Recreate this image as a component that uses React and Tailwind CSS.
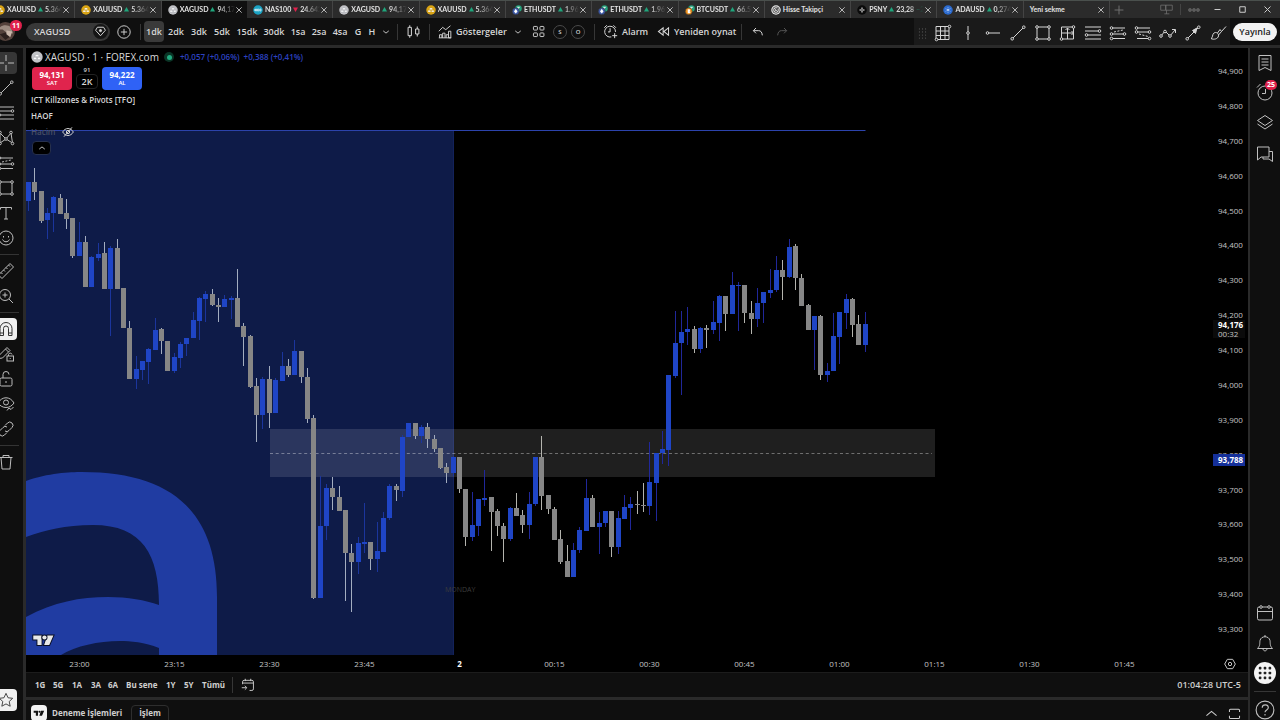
import React from "react";

const BLUE = "#1f45c6";
const GRAY = "#868686";

// Each candle: colour, high, top, bottom, low (chart canvas units)
const CANDLES = `B 182 182 201 211|G 168 182 192 200|G 191 191 221 223|B 208 213 220 239|B 196 197 213 232|G 194 198 214 214|G 199 213 219 229|G 218 218 256 258|B 222 242 256 256|G 236 242 287 287|B 256 257 287 287|B 243 254 258 261|G 242 253 289 289|B 246 248 289 336|G 239 248 289 289|G 288 288 328 328|G 321 328 379 379|B 356 369 379 389|B 361 361 370 380|B 348 349 362 384|B 318 330 350 350|G 328 329 341 354|G 341 341 371 371|B 353 357 371 373|B 342 344 358 368|B 338 338 344 356|B 312 320 338 338|B 297 298 321 340|B 291 294 299 322|G 289 294 305 306|G 298 305 307 322|B 295 299 307 307|B 296 298 300 319|G 269 298 327 327|G 323 326 337 366|G 335 336 387 388|G 378 386 415 442|B 377 379 415 429|G 366 379 413 428|B 378 380 413 413|B 352 366 381 381|G 359 366 375 377|B 340 351 375 375|G 351 351 377 383|G 368 377 419 423|G 415 418 598 599|B 476 526 598 598|B 484 488 526 540|G 477 488 497 510|G 486 497 511 511|G 510 510 553 601|G 544 553 562 612|B 537 543 562 574|B 503 542 544 553|G 542 542 559 570|B 522 551 559 572|B 512 518 552 552|B 484 486 518 520|G 484 486 490 501|B 435 437 491 497|B 423 423 437 437|G 423 423 436 439|B 425 427 436 443|G 423 427 439 448|G 435 439 449 452|G 448 448 468 469|G 463 467 473 483|B 456 457 473 476|G 457 457 489 493|G 489 489 537 546|B 492 525 537 541|B 499 499 526 536|B 470 498 500 506|G 497 497 512 551|G 509 511 526 536|G 523 526 539 562|B 507 508 539 541|G 493 508 516 516|G 510 515 525 533|B 492 504 525 539|B 457 457 504 506|G 436 457 496 510|G 495 495 509 514|G 507 509 540 540|G 530 539 562 564|G 545 561 577 577|B 543 550 577 577|B 527 530 550 553|B 479 498 531 531|G 495 498 527 527|B 512 523 527 554|B 511 511 523 527|G 511 511 547 557|B 511 518 547 554|B 495 507 519 519|B 497 504 508 530|G 491 504 505 514|G 483 505 506 512|B 442 482 506 515|B 453 453 483 521|B 431 449 453 464|B 375 375 450 466|B 311 343 376 378|B 311 332 343 395|B 307 329 332 345|G 326 329 349 353|B 327 328 349 353|G 325 328 330 348|B 301 322 330 334|B 295 296 323 341|G 296 296 314 331|B 272 285 314 314|B 282 285 286 331|G 285 285 313 323|G 301 313 319 334|B 288 303 319 327|B 292 292 303 323|B 269 290 293 298|B 256 270 290 292|G 260 270 277 300|B 239 247 277 278|G 244 246 278 290|G 274 278 306 306|G 304 305 330 330|B 316 316 330 370|G 315 316 375 380|B 363 371 375 382|B 313 336 371 371|B 312 312 337 364|B 294 299 313 329|G 298 299 325 337|G 315 324 345 345|B 312 324 345 352`
  .split("|")
  .map((row, i) => {
    const [c, ...v] = row.split(" ");
    const [high, top, bottom, low] = v.map(Number);
    return { up: c === "B", high, top, bottom, low, x: 28.4 + i * 6.34 };
  });

const PRICES = ["94,900", "94,800", "94,700", "94,600", "94,500", "94,400", "94,300", "94,200", "94,100", "94,000", "93,900", "93,800", "93,700", "93,600", "93,500", "93,400", "93,300"];
const TIMES = ["23:00", "23:15", "23:30", "23:45", "2", "00:15", "00:30", "00:45", "01:00", "01:15", "01:30", "01:45"];

function Icon({ children, className = "size-[18px]", w = 1 }) {
  return (
    <svg viewBox="0 0 18 18" className={"shrink-0 " + className} fill="none" stroke="currentColor" strokeWidth={w} aria-hidden="true">
      {children}
    </svg>
  );
}
const Dot = ({ x, y }) => <circle cx={x} cy={y} r="1.3" fill="#111" />;

const TrendLine = () => (<Icon><path d="M4 14 14 4" /><Dot x={3.2} y={14.8} /><Dot x={14.8} y={3.2} /></Icon>);
const Fib = () => (<Icon><path d="M1 3h16M1 7h14M4 11h13M1 15h16" /><Dot x={15.5} y={7} /><Dot x={2.5} y={11} /></Icon>);
const RectTool = () => (<Icon><rect x="3" y="3" width="12" height="12" /><Dot x={3} y={3} /><Dot x={15} y={3} /><Dot x={3} y={15} /><Dot x={15} y={15} /></Icon>);
const LongPos = () => (<Icon><path d="M3 4h13M3 10h12M3 14.500h13" /><path d="M5 8 14 6" strokeDasharray="2 1.500" /><Dot x={2.5} y={4} /><Dot x={2.5} y={10} /><Dot x={15.5} y={10} /><Dot x={2.5} y={14.5} /></Icon>);
const ShortPos = () => (<Icon><path d="M3 4h13M3 8h12M3 14.500h13" /><path d="M5 10l9 2.500" strokeDasharray="2 1.500" /><Dot x={2.5} y={4} /><Dot x={2.5} y={8} /><Dot x={15.5} y={8} /><Dot x={15.5} y={14.5} /></Icon>);
const Chevron = ({ up }) => (<Icon className="size-[10px]" w={1.6}><path d={up ? "M4 11l5-4 5 4" : "M4 7l5 4 5-4"} /></Icon>);

const LEFT_TOOLS = [
  ["İmleç", <Icon><path d="M9 1v6M9 11v6M1 9h6M11 9h6" /></Icon>, "active"],
  ["Trend çizgisi", <TrendLine />],
  ["Fibonacci", <Fib />],
  ["Formasyonlar", <Icon><path d="M3 14V4l6 6 5-6 1.500 10L9 10l-6 4" /><Dot x={3} y={3.5} /><Dot x={14} y={3.5} /><Dot x={9} y={10} /><Dot x={3} y={14.5} /><Dot x={15.5} y={14.5} /></Icon>],
  ["Tahmin", <LongPos />],
  ["Şekiller", <RectTool />],
  ["Metin", <Icon><path d="M3.500 5.500v-2h11v2M9 3.500v11.500M7 15h4" /></Icon>],
  ["Simgeler", <Icon><circle cx="9" cy="9" r="7" /><path d="M6.500 7v1.500M11.500 7v1.500M5.500 10.500c1.500 3 5.500 3 7 0" /></Icon>],
  "sep",
  ["Ölçüm", <Icon><path d="M1.500 13 13 1.500 16.500 5 5 16.500ZM4 10.500l1.500 1.500M6.500 8 8 9.500M9 5.500 10.500 7M11.500 3 13 4.500" /></Icon>],
  ["Yakınlaştır", <Icon><circle cx="8" cy="8" r="5.500" /><path d="M12 12l4 4M8 5.500v5M5.500 8h5" /></Icon>],
  "sep",
  ["Mıknatıs", <Icon><path d="M3 15.500V8.500a6 6 0 0 1 12 0v7h-3.500V8.500a2.500 2.500 0 0 0-5 0v7ZM3 13h3.500M11.500 13H15" /></Icon>, "on"],
  ["Çizim modu", <Icon><path d="M1.500 13.500 2.500 10 10 2.500l3 3-7.500 7.500ZM8.500 4l3 3" /><rect x="10" y="11" width="6.500" height="5" /><path d="M11.500 11V9.500a1.800 1.800 0 0 1 3.500 0M13.200 13v1" /></Icon>],
  ["Kilitle", <Icon><rect x="3" y="8" width="12" height="8" rx="1.500" /><path d="M6 8V4.500a3 3 0 0 1 6 0M9 11v2" /></Icon>],
  ["Gizle", <Icon><path d="M1 8c4-7 12-7 16 0-4 6-12 6-16 0Z" /><circle cx="9" cy="7.500" r="2.500" /><path d="M10 15.500l2-2.500 2 1.500 2.500-2.500" /></Icon>],
  ["Bağla", <Icon><path d="M8 5.500 10.500 3a3 3 0 0 1 4.500 4.500L12 10.500a3 3 0 0 1-4 .5M10 12.500 7.500 15A3 3 0 0 1 3 10.500L6 7.500a3 3 0 0 1 4-.5" /></Icon>],
  "sep",
  ["Sil", <Icon><path d="M2.500 4.500h13M6 4.500V2.500h6v2M4 4.500 5 16h8l1-11.500" /></Icon>],
];

const DRAW_TOOLS = [
  ["Izgara", <Icon><path d="M2 2.500h13v13H2ZM2 7h13M2 11.500h13M6.500 2.500v13M11 2.500v13" /><Dot x={2.5} y={15.5} /><Dot x={15.5} y={2.5} /></Icon>],
  ["Dikey çizgi", <Icon><path d="M9 2v14" /><Dot x={9} y={9} /></Icon>],
  ["Yatay ışın", <Icon><path d="M3 9h13" /><Dot x={3.5} y={9} /></Icon>],
  ["Trend", <TrendLine />],
  ["Dikdörtgen", <RectTool />],
  ["Fiyat aralığı", <Icon><path d="M2.500 3h12v12h-12ZM8.500 4v11M3 9h12M6.500 6l2-2 2 2M12.500 7l2 2-2 2" /><Dot x={2.5} y={15} /><Dot x={14.5} y={3} /></Icon>],
  ["Fib", <Fib />],
  ["Uzun pozisyon", <LongPos />],
  ["Kısa pozisyon", <ShortPos />],
  ["Elliott", <Icon><path d="M2 12l4-5 5 5 5-6M13 5.500h3.500V9" /><Dot x={2} y={12} /><Dot x={6} y={7.5} /><Dot x={11} y={12} /></Icon>],
  ["Ok", <Icon><path d="M4 14 14 4" /><path d="M13 4 8.500 6.500l3 3Z" fill="currentColor" /><Dot x={3.2} y={14.8} /><Dot x={14.8} y={3.2} /></Icon>],
  ["Fırça", <Icon><path d="M2 14.500c2-.5 1-4 3-5.500 2-1.500 5 .5 4.500 3-.5 3-5 4-7.500 2.500ZM8.500 9 11 5.500l1.500 2L17 2.500M9.500 11l3-3.500" /></Icon>],
];

const TABS = [
  { kind: "gold", name: "XAUUSD", price: "5.364,9", up: true },
  { kind: "gold", name: "XAUUSD", price: "5.364,9", up: true },
  { kind: "silver", name: "XAGUSD", price: "94,176", up: true, active: true },
  { kind: "nas", name: "NAS100", price: "24.642,", up: false },
  { kind: "silver", name: "XAGUSD", price: "94,176", up: true },
  { kind: "gold", name: "XAUUSD", price: "5.364,9", up: true },
  { kind: "eth", name: "ETHUSDT", price: "1.965,", up: true },
  { kind: "eth", name: "ETHUSDT", price: "1.965,", up: true },
  { kind: "btc", name: "BTCUSDT", price: "66.587", up: true },
  { kind: "target", name: "Hisse Takipçi" },
  { kind: "psny", name: "PSNY", price: "23,28", extra: "−20", up: true },
  { kind: "ada", name: "ADAUSD", price: "0,2740", up: true },
  { name: "Yeni sekme" },
];

function Coin({ kind, className = "size-[10px]" }) {
  const fill = { gold: "#dba514", silver: "#c2c3c7", nas: "#1ba3c4", psny: "#0a0a0a", ada: "#2b6bd0", target: "#e5e5e5" }[kind];
  return (
    <svg viewBox="0 0 20 20" className={"shrink-0 " + className} aria-hidden="true">
      {(kind === "eth" || kind === "btc") && (
        <>
          <circle cx="13" cy="7" r="6.500" fill="#24a17b" />
          <path d="M10 4.500h6M13 4.500v5" stroke="#fff" strokeWidth="1.500" />
          <circle cx="7.500" cy="12.500" r="7" fill={kind === "eth" ? "#3f5ba9" : "#f0921e"} stroke="#2a2a2a" />
          <path d={kind === "eth" ? "M7.500 7.500 11 13l-3.500 4L4 13Z" : "M5.500 8.500h3a2 2 0 0 1 0 4h-3 3.500a2 2 0 0 1 0 4H5.500Z"} fill="#fff" />
        </>
      )}
      {fill && <circle cx="10" cy="10" r="9.500" fill={fill} />}
      {(kind === "gold" || kind === "silver") && <path d="M7.500 6h5l1 3.500h-7ZM4.500 10.500H9l1 3.500H3.500ZM11 10.500h4.500l1 3.500H10.500Z" fill="#fff" stroke={kind === "gold" ? "#b88a10" : "#8d8e94"} strokeWidth=".6" />}
      {kind === "nas" && <path d="M3.500 8v4M5 8h2v4H5ZM9 8h2.500v4H9ZM13.500 8H16v4h-2.500Z" fill="none" stroke="#fff" strokeWidth="1.200" />}
      {kind === "psny" && <path d="M10 5v4M10 11v4M5 10h4M11 10h4" stroke="#fff" strokeWidth="2" />}
      {kind === "ada" && <path d="M10 5v10M5.500 7.500l9 5M14.500 7.500l-9 5" stroke="#fff" strokeWidth="1.600" strokeDasharray="1.500 1.500" />}
      {kind === "target" && <g fill="none" stroke="#222" strokeWidth="1.400"><circle cx="10" cy="10" r="6.500" /><circle cx="10" cy="10" r="3" /><path d="M10 10l4-4" /></g>}
    </svg>
  );
}

const Cross = () => (<Icon className="size-[8px]" w={2}><path d="M3 3l12 12M15 3 3 15" /></Icon>);
const Sep = () => <div className="h-4 w-px shrink-0 bg-[#363636]" />;

function Tabs() {
  return (
    <header className="flex h-[18px] shrink-0 items-stretch overflow-hidden border-t border-[#4a504d] bg-[#2b2b2b] font-['Lato',sans-serif] text-[7px] font-bold text-[#e2e2e2]">
      <div className="-ml-[11px] flex w-[1121px] shrink-0">
        {TABS.map((t, i) => (
          <div key={i} className={"flex min-w-0 flex-1 items-center pl-[6px] pr-1 " + (t.active ? "bg-[#101010]" : "border-r border-[#444]")}>
            {t.kind && <Coin kind={t.kind} />}
            <div className={"flex min-w-0 flex-1 items-center gap-[2px] whitespace-nowrap " + (t.price ? "ml-[2px] mask-r-from-70% mask-r-to-100%" : t.kind ? "ml-[2px]" : "")}>
              <span>{t.name}</span>
              {t.price && (
                <svg viewBox="0 0 10 10" className="size-[5px] shrink-0" aria-hidden="true">
                  <path d={t.up ? "M5 0l5 9H0Z" : "M0 1h10L5 10Z"} fill={t.up ? "#20a57c" : "#e0214c"} />
                </svg>
              )}
              {t.price && <span>{t.price}</span>}
              {t.extra && <span className="text-[#20a57c]">{t.extra}</span>}
            </div>
            <button aria-label="Sekmeyi kapat" className="text-[#c8c8c8]"><Cross /></button>
          </div>
        ))}
      </div>
      <button aria-label="Yeni sekme aç" className="ml-1 text-[#777]"><Icon className="size-[10px]" w={1.6}><path d="M9 1v16M1 9h16" /></Icon></button>
      <div className="ml-auto flex items-center text-[#777]">
        <Icon className="size-[13px]"><path d="M1 3h7v7H1ZM8 3h9v7H8ZM9 10v5M6 15h7" /></Icon>
        <div className="mx-[7px] h-[11px] w-px bg-[#444]" />
        <button aria-label="Menü"><Icon className="size-3" w={1.6}><circle cx="3" cy="9" r="1.800" /><circle cx="9" cy="9" r="1.800" /><circle cx="15" cy="9" r="1.800" /></Icon></button>
        <div className="ml-[13px] flex gap-4 pr-[8px] text-[#ccc]">
          <button aria-label="Küçült"><Icon className="size-[9px]" w={2}><path d="M3 9h12" /></Icon></button>
          <button aria-label="Büyüt"><Icon className="size-[9px]" w={2}><path d="M3.500 3.500h11v11h-11Z" /></Icon></button>
          <button aria-label="Kapat"><Icon className="size-[9px]" w={2}><path d="M3 3l12 12M15 3 3 15" /></Icon></button>
        </div>
      </div>
    </header>
  );
}

const FRAMES = [
  ["1dk", "w-5 rounded bg-[#3a3a3a]"], ["2dk", "w-6"], ["3dk", "w-[22px]"], ["5dk", "w-6"], ["15dk", "w-[26px]"], ["30dk", "w-7"],
  ["1sa", "w-5"], ["2sa", "w-[22px]"], ["4sa", "w-5"], ["G", "w-4"], ["H", "w-3"],
];

function Toolbar() {
  return (
    <div className="flex h-[27px] shrink-0 items-center overflow-hidden bg-[#0f0f0f] text-[9px] font-semibold text-[#d6d6d6]">
      <div className="relative h-full w-[26px] shrink-0">
        <svg viewBox="0 0 20 20" className="absolute -left-1 top-1 size-[19px]" aria-hidden="true">
          <circle cx="10" cy="10" r="10" fill="#54423c" />
          <path d="M2 8c3-5 10-6 14-2l2 6-7-1-4-3Z" fill="#9a8a80" />
          <path d="M4 13l6-2 5 4-5 4Z" fill="#2c201e" />
          <path d="M11 9l6 1-2 6-4-3Z" fill="#c9b6aa" />
        </svg>
        <span className="absolute left-[10px] top-[2px] rounded-full bg-[#e0214c] px-[2px] text-[7px] leading-[11px] font-bold text-white">11</span>
      </div>
      <button className="flex h-[18px] w-[84px] shrink-0 items-center justify-between rounded-full bg-[#383838] pl-2 pr-[2px]">
        XAGUSD
        <span className="flex size-[15px] items-center justify-center rounded-full bg-[#151515]">
          <Icon className="size-[11px]" w={1.6}><path d="M4 2h10l3 5-8 9-8-9Z" /><circle cx="9" cy="7.500" r="1.800" fill="currentColor" /></Icon>
        </span>
      </button>
      <button aria-label="Karşılaştır" className="ml-[7px] mr-[9px]"><Icon className="size-[14px]" w={1.2}><circle cx="9" cy="9" r="8" /><path d="M9 5v8M5 9h8" /></Icon></button>
      <Sep />
      <div className="ml-[3px] flex items-center">
        {FRAMES.map(([t, c]) => (<button key={t} className={"h-[21px] shrink-0 text-center " + c}>{t}</button>))}
        <button aria-label="Diğer aralıklar" className="flex w-4 justify-center"><Chevron /></button>
      </div>
      <div className="ml-[3px] mr-2"><Sep /></div>
      <button aria-label="Mum grafiği"><Icon className="size-[15px]" w={1.2}><path d="M2.500 4h4v10h-4ZM4.500 1.500V4M4.500 14v2.500M11.500 6h4v6h-4ZM13.500 3v3M13.500 12v3" /></Icon></button>
      <div className="mx-2"><Sep /></div>
      <button className="flex w-[66px] items-center gap-1 whitespace-nowrap">
        <Icon className="size-[14px]" w={1.2}><path d="M1 8l5-5 4 3 6-5M2 16.500v-4h3v4M6 16.500v-6h3v6M10.500 16.500v-4h3v4M13.500 16.500V8h3v8.500ZM1 16.500h16" /></Icon>Göstergeler
      </button>
      <button aria-label="Favori göstergeler" className="ml-[9px] mr-[9px]"><Chevron /></button>
      <button aria-label="Şablonlar"><Icon className="size-[13px]" w={1.3}><rect x="2" y="2" width="5.500" height="5" rx="1" /><rect x="11" y="2" width="5.500" height="5" rx="1" /><rect x="2" y="11" width="5.500" height="5" rx="1" /><rect x="11" y="11" width="5.500" height="5" rx="1" /></Icon></button>
      <button className="ml-2 size-[14px] rounded-full border border-[#4a4a4a] text-[6px] leading-3">S</button>
      <button className="ml-1 mr-[9px] size-[14px] rounded-full border border-[#4a4a4a] text-[6px] leading-3">O</button>
      <Sep />
      <button className="ml-2 flex w-[54px] items-center gap-1">
        <Icon className="size-[15px]" w={1.2}><path d="M15 9.500a6.500 6.500 0 1 0-5 6M8.500 5v4.500H6M1.500 4.500l3-3M12.500 1.500l3 3M14 11v6M11 14h6" /></Icon>Alarm
      </button>
      <button className="flex w-[80px] items-center gap-1 whitespace-nowrap">
        <Icon className="size-[13px]" w={1.4}><path d="M8.500 4v10L2 9ZM16 4v10L9.500 9Z" /></Icon>Yeniden oynat
      </button>
      <div className="ml-1 mr-[10px]"><Sep /></div>
      <button aria-label="Geri al"><Icon className="size-[12px]" w={1.5}><path d="M6 3 2 7l4 4M2 7h8c3 0 5 2 5.500 7" /></Icon></button>
      <button aria-label="Yinele" className="ml-3 text-[#555]"><Icon className="size-[12px]" w={1.5}><path d="M12 3l4 4-4 4M16 7H8c-3 0-5 2-5.500 7" /></Icon></button>
      <div className="ml-auto flex h-full shrink-0 items-center bg-[#1a1a1a] pt-[3px]">
        <div className="w-4 pl-[3px] text-[#555]"><Icon className="size-[11px]" w={0}><g fill="currentColor">{[2, 7, 12, 17].map((y) => [4, 9, 14].map((x) => <circle key={x + "-" + y} cx={x} cy={y - 0.5} r="1" />))}</g></Icon></div>
        {DRAW_TOOLS.map(([n, ic]) => (<button key={n} aria-label={n} className="flex w-[25px] justify-center">{ic}</button>))}
      </div>
      <button className="mx-[3px] h-[18px] w-11 shrink-0 rounded-full bg-[#f2f2f2] text-[#1b1b1b]">Yayınla</button>
    </div>
  );
}

function LeftBar() {
  return (
    <nav className="flex w-[26px] shrink-0 flex-col overflow-hidden border-r-[3px] border-[#2a2a2a] bg-[#0f0f0f] text-[#bdbdbd]">
      <div className="-ml-[11px] flex h-full w-[34px] flex-col items-center pt-[2px]">
        {LEFT_TOOLS.map((t, i) =>
          t === "sep" ? (
            <div key={i} className="mt-1 mb-[3px] h-px w-[26px] bg-[#343434]" />
          ) : (
            <button key={i} aria-label={t[0]} className="flex h-[25px] shrink-0 items-center justify-center">
              <span className={"flex h-[22px] w-[22px] items-center justify-center rounded " + (t[2] === "on" ? "bg-[#f0f0f0] text-[#333]" : t[2] === "active" ? "bg-[#363636]" : "")}>
                <span className="flex size-4 items-center justify-center">{t[1]}</span>
              </span>
            </button>
          )
        )}
        <button aria-label="Favoriler" className="mt-auto mb-[9px] flex size-[22px] items-center justify-center rounded bg-[#f0f0f0] text-[#333]">
          <Icon className="size-4"><path d="M9 1.500l2.300 5 5.200.6-3.900 3.600 1.100 5.300L9 13.400 4.300 16l1.100-5.300L1.500 7.100l5.200-.6Z" /></Icon>
        </button>
      </div>
    </nav>
  );
}

const TVLogo = ({ className, fill, stroke }) => (
  <svg viewBox="0 0 36 20" className={className} aria-hidden="true">
    <path d="M2 2h13v15H8.500V8.500H2ZM24 2h9.500L27 17h-8Z" fill={fill} stroke={stroke} strokeWidth="3" paintOrder="stroke" />
    <circle cx="19.500" cy="5.300" r="3.300" fill={fill} stroke={stroke} strokeWidth="3" paintOrder="stroke" />
  </svg>
);

function Plot() {
  return (
    <svg className="absolute inset-0 size-full" aria-label="XAGUSD 1 dakikalık grafik">
      <g transform="translate(-26 -48)">
        <rect x="26" y="131" width="428" height="524" fill="#0e1b48" />
        <path d="M26 481C48 473 70 472 82 472C170 472 217 510 217 597V655H159V648C145 642 130 641 120 641C98 641 76 646 61 655H26V617C54 602 80 597 108 597C128 597 145 600 159 605C159 555 143 525 93 525C65 525 45 530 26 537Z" fill="#203ca2" />
        <path d="M453.500 131V655" stroke="#13225a" />
        <path d="M26 130.500H865.500" stroke="#2c43ab" />
        <rect x="270" y="429" width="665" height="48" fill="#fff" fillOpacity=".12" />
        <path d="M270 453.500H932" stroke="#fff" strokeOpacity=".36" strokeDasharray="3 2.700" />
        <text x="445" y="591.500" fontSize="7" fill="#3d3d3d">MONDAY</text>
        {CANDLES.map((c, i) => (
          <g key={i}>
            <rect x={Math.round(c.x - 0.5)} y={c.high} width="1" height={c.low - c.high} fill={c.up ? (c.x < 454 ? "#1b359c" : "#20279a") : c.x < 454 ? "#a3adc0" : "#b4b4ae"} />
            <rect x={Math.round(c.x - 2.5)} y={c.top} width="5" height={c.bottom - c.top} fill={c.up ? BLUE : GRAY} />
          </g>
        ))}
      </g>
    </svg>
  );
}

function Legend() {
  return (
    <div className="relative flex flex-col items-start pl-[5px] pt-[2px] text-[8px] font-semibold text-[#d8d8d8]">
      <div className="flex h-[14px] items-center">
        <Coin kind="silver" className="size-3" />
        <h1 className="ml-[2px] w-[115px] whitespace-nowrap text-[10px] font-medium">XAGUSD · 1 · FOREX.com</h1>
        <span className="ml-1 flex size-[10px] shrink-0 items-center justify-center rounded-full bg-[#0a3526]"><span className="size-[5px] rounded-full bg-[#22ab80]" /></span>
        <span className="ml-[6px] flex gap-1 whitespace-nowrap font-semibold text-[#2c42c0]"><span>+0,057 (+0,06%)</span><span>+0,388 (+0,41%)</span></span>
      </div>
      <div className="ml-px mt-[2px] flex h-6 items-center gap-1">
        <button className="flex h-[23px] w-10 flex-col items-center justify-center rounded bg-[#e0244d] font-bold text-white"><span className="leading-[9px]">94,131</span><span className="text-[6px] leading-[8px] font-semibold">SAT</span></button>
        <div className="flex h-6 w-[22px] flex-col items-center"><span className="text-[6px] leading-[8px]">91</span><span className="flex h-[15px] w-full items-center justify-center rounded border border-[#222] text-[9px]">2K</span></div>
        <button className="flex h-[23px] w-10 flex-col items-center justify-center rounded bg-[#2f62f6] font-bold text-white"><span className="leading-[9px]">94,222</span><span className="text-[6px] leading-[8px] font-semibold">AL</span></button>
      </div>
      <div className="mt-[2px] h-4 leading-4">ICT Killzones &amp; Pivots [TFO]</div>
      <div className="h-4 leading-4">HAOF</div>
      <div className="flex h-4 items-center gap-[6px] text-[#4a5064]"><span>Hacim</span><span className="text-[#d0d0d0]"><Icon className="size-3" w={1.5}><path d="M1 9c4-7 12-7 16 0-4 7-12 7-16 0ZM3 16 15 2" /><circle cx="9" cy="9" r="2.500" /></Icon></span></div>
      <button aria-label="Göstergeleri daralt" className="ml-px mt-[1px] flex h-[14px] w-[19px] items-center justify-center rounded-sm border border-[#26304d] bg-black"><Chevron up /></button>
    </div>
  );
}

function PriceAxis() {
  return (
    <div className="relative w-[42px] shrink-0 pt-[17px] text-[8px] font-medium text-[#c4c4c4]">
      <div className="flex h-[570px] flex-col justify-between pl-3 leading-[12px]">
        {PRICES.map((p) => (<div key={p}>{p}</div>))}
      </div>
      <div className="absolute left-[7px] top-[272px] w-8 bg-[#0b0b0b] pl-[5px] leading-[9px]">
        <div className="font-bold text-white">94,176</div><div>00:32</div>
      </div>
      <div className="absolute left-[7px] top-[406px] w-8 bg-[#15309a] pl-[5px] font-bold leading-[12px] text-white">93,788</div>
    </div>
  );
}

const RANGES = [["1G", "w-[18px]"], ["5G", "w-[19px]"], ["1A", "w-[19px]"], ["3A", "w-[17px]"], ["6A", "w-[18px]"], ["Bu sene", "w-10"], ["1Y", "w-[18px]"], ["5Y", "w-[18px]"], ["Tümü", "w-[30px]"]];

function Chart() {
  return (
    <main className="flex min-w-0 flex-1 flex-col bg-black">
      <div className="flex min-h-0 flex-1">
        <section className="relative min-w-0 flex-1 overflow-hidden">
          <Plot />
          <Legend />
          <TVLogo className="absolute bottom-2 left-[6px] h-[13px] w-[23px]" fill="#e8e8e8" stroke="#0a0f25" />
        </section>
        <PriceAxis />
      </div>
      <div className="flex h-[17px] shrink-0 items-center text-[8px] font-medium text-[#c4c4c4]">
        <div className="ml-[6px] flex flex-1">{TIMES.map((t) => (<span key={t} className={"w-[95px] text-center " + (t === "2" ? "font-bold text-white" : "")}>{t}</span>))}</div>
        <button aria-label="Eksen ayarları" className="mr-3"><Icon className="size-3" w={1.5}><path d="M5 2h8l4 7-4 7H5L1 9Z" /><circle cx="9" cy="9" r="2.500" /></Icon></button>
      </div>
      <div className="flex h-[25px] shrink-0 items-center border-t border-[#1c1c1c] bg-[#0f0f0f] pl-[9px] pr-[7px] text-[8px] font-bold text-[#cfcfcf]">
        {RANGES.map(([r, c]) => (<button key={r} className={"shrink-0 whitespace-nowrap text-left " + c}>{r}</button>))}
        <Sep />
        <button aria-label="Tarihe git" className="ml-2"><Icon className="size-[14px]" w={1.2}><path d="M2 8V5a2 2 0 0 1 2-2h10a2 2 0 0 1 2 2v9a2 2 0 0 1-2 2h-3M2 6.500h14M5.500 1v3M12.500 1v3M1 12.500h6M5 10l2.500 2.500L5 15" /></Icon></button>
        <button className="ml-auto text-[9px] font-semibold">01:04:28 UTC-5</button>
      </div>
      <div className="flex h-[23px] shrink-0 items-start border-t-[3px] border-[#2a2a2a] bg-[#0f0f0f] pl-[5px] pr-[7px] pt-[5px] text-[8px] font-bold text-[#cfcfcf]">
        <span className="flex size-4 items-center justify-center rounded-sm bg-[#f0f0f0]"><TVLogo className="w-3" fill="#111" stroke="none" /></span>
        <button className="ml-[5px] w-[79px] whitespace-nowrap text-left leading-4">Deneme İşlemleri</button>
        <button className="h-5 w-[38px] shrink-0 rounded border border-[#2e2e2e] pb-1 leading-[14px]">İşlem</button>
        <div className="ml-auto flex gap-[10px] pt-[2px]">
          <button aria-label="Paneli aç"><Icon className="size-[13px]" w={1.4}><path d="M2 12l7-6 7 6" /></Icon></button>
          <button aria-label="Tam ekran"><Icon className="size-[13px]" w={1.4}><path d="M2 7V4.500A1.500 1.500 0 0 1 3.500 3h11A1.500 1.500 0 0 1 16 4.500V7M2 12v2.500A1.500 1.500 0 0 0 3.500 16h11a1.500 1.500 0 0 0 1.500-1.500V12" /></Icon></button>
        </div>
      </div>
    </main>
  );
}

function RightBar() {
  return (
    <aside className="flex w-8 shrink-0 flex-col items-center overflow-hidden border-l-2 border-[#2a2a2a] bg-[#0f0f0f] text-[#c0c0c0]">
      <button aria-label="İzleme listesi" className="h-[29px]"><Icon><path d="M3 1.500h12v15l-6-3-6 3ZM5.500 5h7M5.500 8h7M5.500 11h7" /></Icon></button>
      <button aria-label="Alarmlar" className="relative h-[29px]"><Icon><circle cx="9" cy="10" r="7" /><path d="M9.500 6v4.500H6M1 4.500 4.500 1" /></Icon>
        <span className="absolute -right-[3px] top-[3px] rounded-full bg-[#e0214c] px-[2px] text-[7px] font-bold leading-[10px] text-white">25</span>
      </button>
      <button aria-label="Nesne ağacı" className="h-8"><Icon><path d="M9 2.500 16.500 7.500 9 12.500 1.500 7.500ZM1.500 11 9 16l7.500-5" /></Icon></button>
      <button aria-label="Sohbet" className="h-[31px]"><Icon><path d="M1.500 2h11.500v10H5l-3.500 3ZM13 6.500h3.500v10L13 14H7v-2" /></Icon></button>
      <button aria-label="Takvim" className="mt-auto h-[30px]"><Icon><rect x="1.500" y="3" width="15" height="13" rx="1.500" /><path d="M1.500 7.500h15" /><Dot x={5} y={3} /><Dot x={13} y={3} /></Icon></button>
      <button aria-label="Bildirimler" className="mb-1 h-[30px]"><Icon><path d="M1.500 14.500c3-3 2-5 2.500-8 1-5 9-5 10 0 .5 3-.5 5 2.500 8ZM7 15c.5 2.500 3.500 2.500 4 0M9 1v2" /></Icon></button>
      <button aria-label="Ürünler" className="flex size-[22px] shrink-0 items-center justify-center rounded-full bg-[#f4f4f4] text-[#222]"><Icon className="size-4" w={0}><g fill="currentColor">{[3.5, 9, 14.5].map((y) => [3.5, 9, 14.5].map((x) => <rect key={x + "-" + y} x={x - 1.5} y={y - 1.5} width="3" height="3" rx="1" />))}</g></Icon></button>
      <div className="my-[7px] h-px w-[22px] shrink-0 bg-[#363636]" />
      <button aria-label="Yardım" className="mt-[1px] h-5 shrink-0"><Icon className="size-5"><circle cx="9" cy="9" r="8" /><path d="M6.500 7c0-3.500 5.500-3.500 5.500 0 0 2-3 2-3 4M9 12.500V14" /></Icon></button>
    </aside>
  );
}

export default function App() {
  return (
    <div className="flex h-screen flex-col overflow-hidden bg-black font-['Open_Sans',sans-serif]">
      <Tabs />
      <Toolbar />
      <div className="h-[3px] shrink-0 bg-[#2a2a2a]" />
      <div className="flex min-h-0 flex-1">
        <LeftBar />
        <Chart />
        <RightBar />
      </div>
    </div>
  );
}
